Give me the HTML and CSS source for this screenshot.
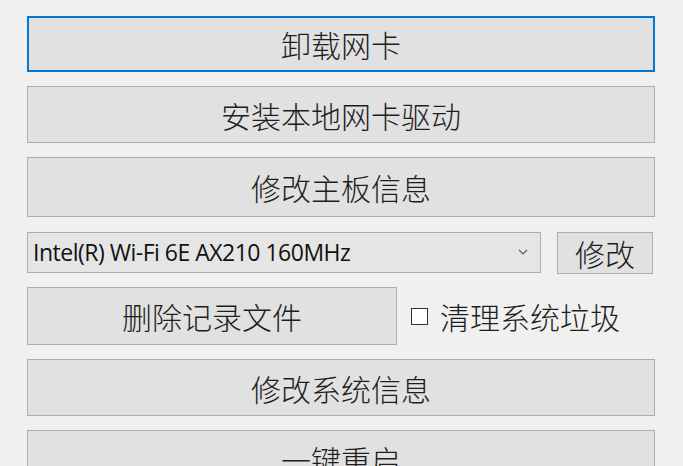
FILE: index.html
```html
<!DOCTYPE html>
<html lang="zh-CN">
<head>
    <meta charset="UTF-8">
    <meta name="viewport" content="width=device-width, initial-scale=1.0">
    <title>网卡工具</title>
    <link rel="stylesheet" href="styles.css">
</head>
<body>
    <div class="panel">
        <button class="btn btn-focus h56">卸载网卡</button>
        <button class="btn h57">安装本地网卡驱动</button>
        <button class="btn h60">修改主板信息</button>

        <div class="row row-combo">
            <div class="combo">
                <span class="combo-text">Intel(R) Wi-Fi 6E AX210 160MHz</span>
                <svg class="chevron" width="10" height="6" viewBox="0 0 10 6">
                    <polyline points="1,1 5,5 9,1" fill="none" stroke="#606060" stroke-width="1.2"/>
                </svg>
            </div>
            <button class="btn btn-small">修改</button>
        </div>

        <div class="row row-clean">
            <button class="btn btn-half">删除记录文件</button>
            <label class="check">
                <span class="check-box"></span>
                <span>清理系统垃圾</span>
            </label>
        </div>

        <button class="btn h57">修改系统信息</button>
        <button class="btn h57">一键重启</button>
    </div>
</body>
</html>
```

FILE: styles.css
```css
* {
    margin: 0;
    padding: 0;
    box-sizing: border-box;
}

body {
    background: #f0f0f0;
    font-family: "Noto Sans CJK SC", "Noto Sans", sans-serif;
    color: #222;
    overflow: hidden;
    height: 466px;
}

.panel {
    display: flex;
    flex-direction: column;
    gap: 14px;
    width: 628px;
    margin-left: 27px;
    padding-top: 16px;
}

.btn {
    display: flex;
    align-items: center;
    justify-content: center;
    width: 100%;
    background: #e1e1e1;
    border: 1px solid #adadad;
    font-family: "Noto Sans CJK SC", sans-serif;
    font-size: 30px;
    font-weight: 300;
    color: #1e1e1e;
    flex-shrink: 0;
}

.btn-focus {
    border: 2px solid #0078d7;
}

.h56 { height: 56px; }
.h57 { height: 57px; }
.h60 { height: 60px; }

.row {
    display: flex;
    align-items: center;
    flex-shrink: 0;
}

.row-combo {
    height: 42px;
    gap: 16px;
}

.combo {
    flex: 1;
    height: 41px;
    display: flex;
    align-items: center;
    justify-content: space-between;
    background: #e5e5e5;
    border: 1px solid #acacac;
    padding: 0 12px 0 5px;
}

.combo-text {
    font-family: "Open Sans", "Noto Sans", sans-serif;
    font-size: 23px;
    letter-spacing: -0.5px;
    color: #111;
}

.chevron {
    display: block;
}

.btn-small {
    width: 96px;
    height: 42px;
    margin-top: 2px;
    margin-right: 2px;
}

.row-clean {
    height: 58px;
    gap: 14px;
}

.btn-half {
    width: 370px;
    height: 58px;
}

.check {
    display: flex;
    align-items: center;
    gap: 12px;
    font-size: 30px;
    font-weight: 300;
    color: #1e1e1e;
}

.check-box {
    width: 17px;
    height: 17px;
    border: 1px solid #333;
    background: #fff;
}
```
